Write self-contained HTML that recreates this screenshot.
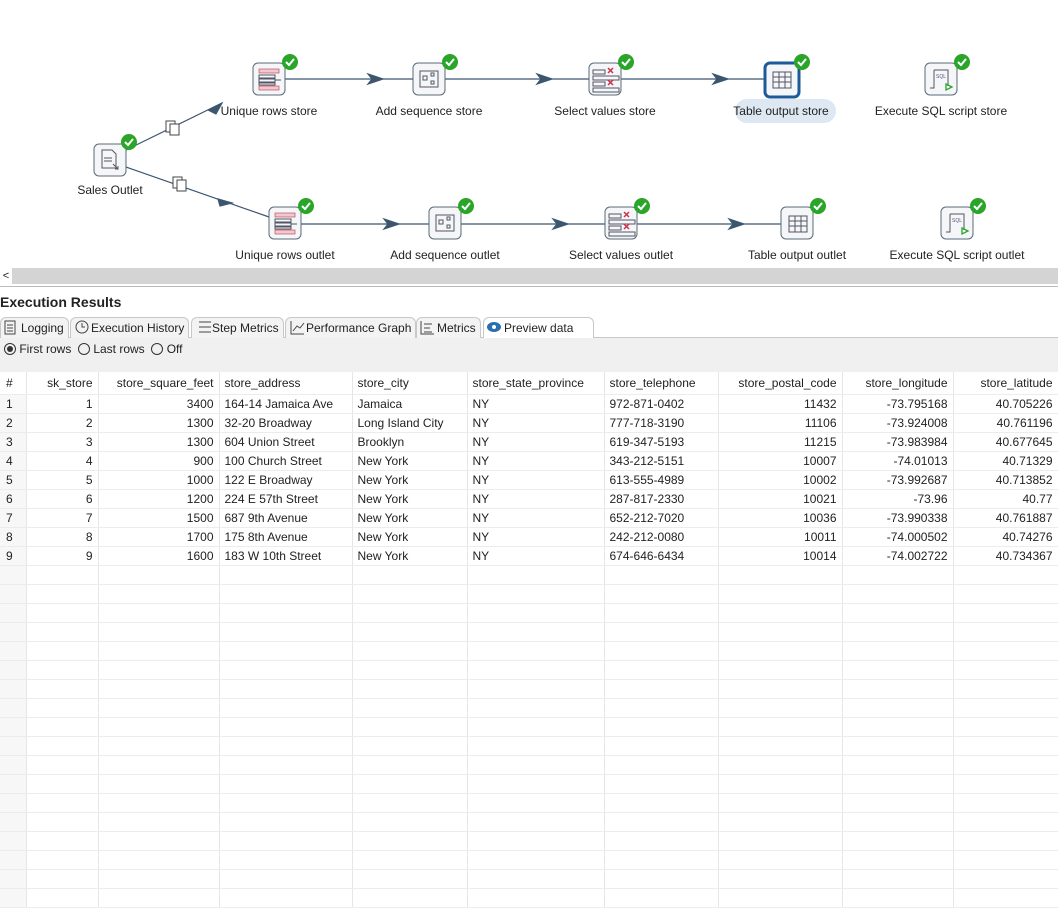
<!DOCTYPE html>
<html><head><style>
body{margin:0;width:1058px;height:903px;overflow:hidden;background:#fff;font-family:"Liberation Sans",sans-serif;font-size:12px;color:#222;position:relative}
.a{position:absolute}
.lbl{position:absolute;font-size:12px;white-space:nowrap;transform:translateX(-50%)}
table{position:absolute;left:0;top:372px;border-collapse:collapse;table-layout:fixed;width:1058px}
td{height:18px;border-right:1px solid #e6e6e6;border-bottom:1px solid #ececec;padding:0 5px;white-space:nowrap;overflow:hidden;font-size:12px}
tr.h td{height:22px;background:#fff}
td.r{text-align:right}
td.n{background:#f7f7f7;padding-left:6px}
.tab{position:absolute;top:317px;height:20px;line-height:20px;font-size:12px;border:1px solid #c8c8c8;border-bottom:none;border-radius:6px 6px 0 0;background:#f3f3f3;padding:0 4px 0 20px}
</style></head><body>
<svg class="a" style="left:0;top:0" width="1058" height="268">
<defs>
<g id="ck"><circle r="8" fill="#2aa52a"/><path d="M-4,0 L-1,3 L4,-3" stroke="#fff" stroke-width="2" fill="none"/></g></defs>
<g stroke="#3d5670" stroke-width="1.2" fill="none">
<line x1="126" y1="150" x2="222" y2="103"/><path d="M208,110 L222,103 L216,114z" fill="#3d5670"/>
<line x1="126" y1="167" x2="269" y2="217"/><path d="M218,199 L232,203 L220,206z" fill="#3d5670"/>
<line x1="285" y1="79" x2="413" y2="79"/><path d="M368,74 L383,79 L368,84 L372,79z" fill="#3d5670"/>
<line x1="445" y1="79" x2="589" y2="79"/><path d="M537,74 L552,79 L537,84 L541,79z" fill="#3d5670"/>
<line x1="621" y1="79" x2="765" y2="79"/><path d="M713,74 L728,79 L713,84 L717,79z" fill="#3d5670"/>
<line x1="301" y1="224" x2="429" y2="224"/><path d="M384,219 L399,224 L384,229 L388,224z" fill="#3d5670"/>
<line x1="461" y1="224" x2="605" y2="224"/><path d="M553,219 L568,224 L553,229 L557,224z" fill="#3d5670"/>
<line x1="637" y1="224" x2="781" y2="224"/><path d="M729,219 L744,224 L729,229 L733,224z" fill="#3d5670"/>
</g>
<g stroke="#444" fill="#fff" stroke-width="1"><rect x="166" y="121" width="9" height="11"/><rect x="170" y="124" width="9" height="11"/><rect x="173" y="177" width="9" height="11"/><rect x="177" y="180" width="9" height="11"/></g>
<rect x="735" y="99" width="101" height="24" rx="12" fill="#dde8f3"/>
<g fill="#f4f6f8" stroke="#5a6a7a" stroke-width="1">
<rect x="94" y="144" width="32" height="32" rx="5"/>
<rect x="253" y="63" width="32" height="32" rx="5"/><rect x="413" y="63" width="32" height="32" rx="5"/><rect x="589" y="63" width="32" height="32" rx="5"/>
<rect x="765" y="63" width="34" height="34" rx="5" stroke="#1d5a9a" stroke-width="3"/><rect x="925" y="63" width="32" height="32" rx="5"/>
<rect x="269" y="207" width="32" height="32" rx="5"/><rect x="429" y="207" width="32" height="32" rx="5"/><rect x="605" y="207" width="32" height="32" rx="5"/><rect x="781" y="207" width="32" height="32" rx="5"/><rect x="941" y="207" width="32" height="32" rx="5"/>
</g>
<g fill="#f3c8cf" stroke="#b03a4a" stroke-width="0.6"><rect x="259" y="69" width="20" height="4"/><rect x="259" y="86" width="20" height="4"/><rect x="275" y="213" width="20" height="4"/><rect x="275" y="230" width="20" height="4"/></g>
<g stroke="#556" fill="none" stroke-width="1">
<path d="M102,150 h10 l4,4 v14 h-14z M104,158h8 M104,161h8"/><path d="M113,164 l5,5 m0,-3 v3 h-3"/>
<path d="M259,75h16v3h-16z M259,79h16v3h-16z M259,83h16v2h-16z M275,80h6"/>
<path d="M275,219h16v3h-16z M275,223h16v3h-16z M275,227h16v2h-16z M291,224h6"/>
<rect x="420" y="71" width="18" height="16"/><rect x="423" y="76" width="4" height="4"/><rect x="431" y="73" width="3" height="3"/><rect x="431" y="81" width="3" height="3"/>
<rect x="436" y="215" width="18" height="16"/><rect x="439" y="220" width="4" height="4"/><rect x="447" y="217" width="3" height="3"/><rect x="447" y="225" width="3" height="3"/>
<path d="M593,70h12v4h-12z M593,76h26v4h-26z M593,82h12v4h-12z M593,88h26v4h-26z"/>
<path d="M609,214h12v4h-12z M609,220h26v4h-26z M609,226h12v4h-12z M609,232h26v4h-26z"/>
<rect x="773" y="72" width="18" height="16"/><path d="M773,77h18 M773,82h18 M779,72v16 M785,72v16"/>
<rect x="789" y="216" width="18" height="16"/><path d="M789,221h18 M789,226h18 M795,216v16 M801,216v16"/>
<path d="M934,70 h14 v16 M934,70 v18 h-4"/><path d="M950,214 h14 v16 M950,214 v18 h-4"/>
</g>
<g stroke="#d0304a" stroke-width="1.5"><path d="M608,68l5,5m0,-5l-5,5 M608,80l5,5m0,-5l-5,5 M624,212l5,5m0,-5l-5,5 M624,224l5,5m0,-5l-5,5"/></g>
<g fill="none" stroke="#2aa52a" stroke-width="1.3"><path d="M946,84l6,3l-6,3z M962,228l6,3l-6,3z"/></g>
<text x="936" y="78" font-size="5" fill="#557">SQL</text><text x="952" y="222" font-size="5" fill="#557">SQL</text>
<use href="#ck" x="129" y="142"/><use href="#ck" x="290" y="62"/><use href="#ck" x="450" y="62"/><use href="#ck" x="626" y="62"/><use href="#ck" x="802" y="62"/><use href="#ck" x="962" y="62"/>
<use href="#ck" x="306" y="206"/><use href="#ck" x="466" y="206"/><use href="#ck" x="642" y="206"/><use href="#ck" x="818" y="206"/><use href="#ck" x="978" y="206"/>
</svg>
<div class="lbl" style="left:110px;top:183px">Sales Outlet</div>
<div class="lbl" style="left:269px;top:104px">Unique rows store</div>
<div class="lbl" style="left:429px;top:104px">Add sequence store</div>
<div class="lbl" style="left:605px;top:104px">Select values store</div>
<div class="lbl" style="left:781px;top:104px">Table output store</div>
<div class="lbl" style="left:941px;top:104px">Execute SQL script store</div>
<div class="lbl" style="left:285px;top:248px">Unique rows outlet</div>
<div class="lbl" style="left:445px;top:248px">Add sequence outlet</div>
<div class="lbl" style="left:621px;top:248px">Select values outlet</div>
<div class="lbl" style="left:797px;top:248px">Table output outlet</div>
<div class="lbl" style="left:957px;top:248px">Execute SQL script outlet</div>
<div class="a" style="left:0;top:268px;width:1058px;height:16px;background:#d4d4d4"></div>
<div class="a" style="left:0;top:268px;width:12px;height:16px;background:#fff;font-size:11px;line-height:16px;text-align:center">&lt;</div>
<div class="a" style="left:0;top:286px;width:1058px;height:1px;background:#bbb"></div>
<div class="a" style="left:0;top:294px;font-weight:bold;font-size:14px">Execution Results</div>
<div class="a" style="left:0;top:337px;width:1058px;height:35px;background:#f0f0f0;border-top:1px solid #c8c8c8"></div>
<div class="tab" style="left:0">Logging</div>
<div class="tab" style="left:70px">Execution History</div>
<div class="tab" style="left:191px">Step Metrics</div>
<div class="tab" style="left:285px">Performance Graph</div>
<div class="tab" style="left:416px">Metrics</div>
<div class="tab" style="left:483px;background:#fff;width:85px">Preview data</div>
<svg class="a" style="left:0;top:317px" width="600" height="20"><g stroke="#444" fill="none"><rect x="5" y="4" width="10" height="13"/><path d="M7,8h6M7,11h6M7,14h6"/><circle cx="82" cy="10" r="6"/><path d="M82,6v4h3"/><path d="M199,5h12M199,10h12M199,15h12"/><path d="M291,4v13h13 M293,14l4,-5l3,2l4,-5"/><path d="M421,4v13h13 M424,7h8M424,11h6M424,15h8"/></g><ellipse cx="494" cy="10" rx="7" ry="5" fill="#2a6fb0"/><circle cx="494" cy="10" r="2" fill="#fff"/></svg>
<div class="a" style="left:4px;top:341px;font-size:12px;line-height:16px">
<span style="display:inline-block;width:10px;height:10px;border:1px solid #333;border-radius:50%;vertical-align:-2px;position:relative"><span style="position:absolute;left:2px;top:2px;width:6px;height:6px;border-radius:50%;background:#333"></span></span> First rows &nbsp;<span style="display:inline-block;width:10px;height:10px;border:1px solid #333;border-radius:50%;vertical-align:-2px"></span> Last rows &nbsp;<span style="display:inline-block;width:10px;height:10px;border:1px solid #333;border-radius:50%;vertical-align:-2px"></span> Off</div>
<table>
<colgroup><col style="width:26px"><col style="width:72px"><col style="width:121px"><col style="width:133px"><col style="width:115px"><col style="width:137px"><col style="width:114px"><col style="width:124px"><col style="width:111px"><col style="width:105px"></colgroup>
<tr class="h"><td class="n" style="background:#fff">#</td><td class="r">sk_store</td><td class="r">store_square_feet</td><td>store_address</td><td>store_city</td><td>store_state_province</td><td>store_telephone</td><td class="r">store_postal_code</td><td class="r">store_longitude</td><td class="r">store_latitude</td></tr>
<tr><td class="n">1</td><td class="r">1</td><td class="r">3400</td><td>164-14 Jamaica Ave</td><td>Jamaica</td><td>NY</td><td>972-871-0402</td><td class="r">11432</td><td class="r">-73.795168</td><td class="r">40.705226</td></tr>
<tr><td class="n">2</td><td class="r">2</td><td class="r">1300</td><td>32-20 Broadway</td><td>Long Island City</td><td>NY</td><td>777-718-3190</td><td class="r">11106</td><td class="r">-73.924008</td><td class="r">40.761196</td></tr>
<tr><td class="n">3</td><td class="r">3</td><td class="r">1300</td><td>604 Union Street</td><td>Brooklyn</td><td>NY</td><td>619-347-5193</td><td class="r">11215</td><td class="r">-73.983984</td><td class="r">40.677645</td></tr>
<tr><td class="n">4</td><td class="r">4</td><td class="r">900</td><td>100 Church Street</td><td>New York</td><td>NY</td><td>343-212-5151</td><td class="r">10007</td><td class="r">-74.01013</td><td class="r">40.71329</td></tr>
<tr><td class="n">5</td><td class="r">5</td><td class="r">1000</td><td>122 E Broadway</td><td>New York</td><td>NY</td><td>613-555-4989</td><td class="r">10002</td><td class="r">-73.992687</td><td class="r">40.713852</td></tr>
<tr><td class="n">6</td><td class="r">6</td><td class="r">1200</td><td>224 E 57th Street</td><td>New York</td><td>NY</td><td>287-817-2330</td><td class="r">10021</td><td class="r">-73.96</td><td class="r">40.77</td></tr>
<tr><td class="n">7</td><td class="r">7</td><td class="r">1500</td><td>687 9th Avenue</td><td>New York</td><td>NY</td><td>652-212-7020</td><td class="r">10036</td><td class="r">-73.990338</td><td class="r">40.761887</td></tr>
<tr><td class="n">8</td><td class="r">8</td><td class="r">1700</td><td>175 8th Avenue</td><td>New York</td><td>NY</td><td>242-212-0080</td><td class="r">10011</td><td class="r">-74.000502</td><td class="r">40.74276</td></tr>
<tr><td class="n">9</td><td class="r">9</td><td class="r">1600</td><td>183 W 10th Street</td><td>New York</td><td>NY</td><td>674-646-6434</td><td class="r">10014</td><td class="r">-74.002722</td><td class="r">40.734367</td></tr>
<tr><td class="n"></td><td></td><td></td><td></td><td></td><td></td><td></td><td></td><td></td><td></td></tr>
<tr><td class="n"></td><td></td><td></td><td></td><td></td><td></td><td></td><td></td><td></td><td></td></tr>
<tr><td class="n"></td><td></td><td></td><td></td><td></td><td></td><td></td><td></td><td></td><td></td></tr>
<tr><td class="n"></td><td></td><td></td><td></td><td></td><td></td><td></td><td></td><td></td><td></td></tr>
<tr><td class="n"></td><td></td><td></td><td></td><td></td><td></td><td></td><td></td><td></td><td></td></tr>
<tr><td class="n"></td><td></td><td></td><td></td><td></td><td></td><td></td><td></td><td></td><td></td></tr>
<tr><td class="n"></td><td></td><td></td><td></td><td></td><td></td><td></td><td></td><td></td><td></td></tr>
<tr><td class="n"></td><td></td><td></td><td></td><td></td><td></td><td></td><td></td><td></td><td></td></tr>
<tr><td class="n"></td><td></td><td></td><td></td><td></td><td></td><td></td><td></td><td></td><td></td></tr>
<tr><td class="n"></td><td></td><td></td><td></td><td></td><td></td><td></td><td></td><td></td><td></td></tr>
<tr><td class="n"></td><td></td><td></td><td></td><td></td><td></td><td></td><td></td><td></td><td></td></tr>
<tr><td class="n"></td><td></td><td></td><td></td><td></td><td></td><td></td><td></td><td></td><td></td></tr>
<tr><td class="n"></td><td></td><td></td><td></td><td></td><td></td><td></td><td></td><td></td><td></td></tr>
<tr><td class="n"></td><td></td><td></td><td></td><td></td><td></td><td></td><td></td><td></td><td></td></tr>
<tr><td class="n"></td><td></td><td></td><td></td><td></td><td></td><td></td><td></td><td></td><td></td></tr>
<tr><td class="n"></td><td></td><td></td><td></td><td></td><td></td><td></td><td></td><td></td><td></td></tr>
<tr><td class="n"></td><td></td><td></td><td></td><td></td><td></td><td></td><td></td><td></td><td></td></tr>
<tr><td class="n"></td><td></td><td></td><td></td><td></td><td></td><td></td><td></td><td></td><td></td></tr>
</table>
</body></html>
